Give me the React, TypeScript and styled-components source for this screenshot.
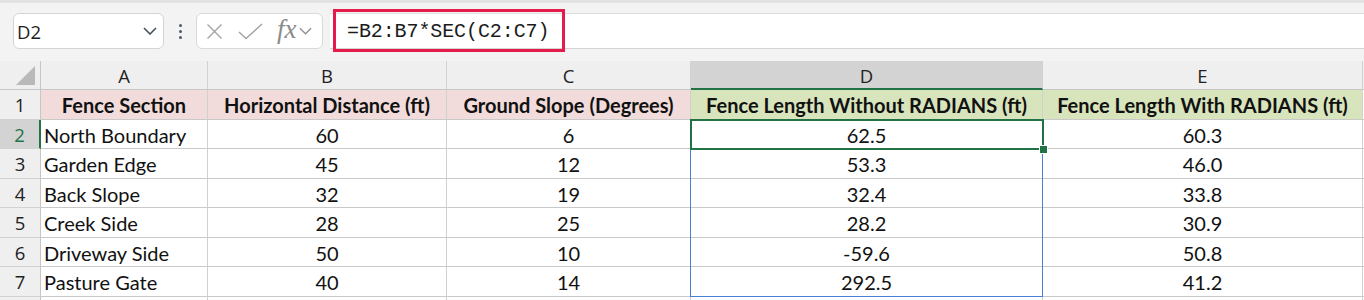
import React from "react";
import styled, { createGlobalStyle } from "styled-components";

const GlobalStyle = createGlobalStyle`
  html, body {
    margin: 0;
    padding: 0;
    background: #ffffff;
  }
  body {
    width: 1364px;
    height: 300px;
    overflow: hidden;
    font-family: Lato, "Liberation Sans", sans-serif;
  }
`;

const COLS = [41, 167, 239, 244, 352, 320];
const ROWS = [29, 30, 29, 30, 29, 30, 29, 30, 30];

const Toolbar = styled.div`
  height: 61px;
  box-sizing: border-box;
  background: #f3f3f3;
  border-top: 3px solid #e2e2e2;
  display: flex;
  align-items: flex-start;
  padding: 10px 0 0 13px;
`;

const NameBox = styled.div`
  width: 151px;
  height: 36px;
  box-sizing: border-box;
  background: #fff;
  border: 1px solid #d5d5d5;
  border-radius: 6px;
  display: flex;
  align-items: center;
  justify-content: space-between;
  padding: 0 6px 0 3px;
  font-family: "Open Sans", "Noto Sans", sans-serif;
  font-size: 18.5px;
  color: #1e1e1e;
`;

const Dots = styled.div`
  width: 32px;
  height: 36px;
  display: flex;
  flex-direction: column;
  align-items: center;
  justify-content: center;
  gap: 3px;

  span {
    width: 3px;
    height: 3px;
    border-radius: 50%;
    background: #4d5966;
  }
`;

const FxBox = styled.div`
  width: 127px;
  height: 36px;
  box-sizing: border-box;
  background: #fff;
  border: 1px solid #d9d9d9;
  border-radius: 6px;
  display: flex;
  align-items: center;
  padding: 0 4px 0 9px;
`;

const FxText = styled.span`
  font-family: "Liberation Serif", "DejaVu Serif", serif;
  font-style: italic;
  font-size: 27px;
  color: #8b8b8b;
  margin: -4px 2px 0 13px;
`;

const FormulaBar = styled.div`
  position: relative;
  flex: 1;
  height: 36px;
  margin-left: 7px;
  box-sizing: border-box;
  background: #fff;
  border-top: 1px solid #dedede;
  border-bottom: 1px solid #d3d3d3;
  display: flex;
  align-items: center;
  padding-left: 17px;
  font-family: "Liberation Mono", "DejaVu Sans Mono", monospace;
  font-size: 20px;
  letter-spacing: -0.1px;
  color: #1b1b1b;
`;

const Highlight = styled.div`
  position: absolute;
  left: 3px;
  top: -5px;
  width: 232px;
  height: 43px;
  box-sizing: border-box;
  border: 3px solid #e31c4c;
`;

const Sheet = styled.div`
  position: relative;
  display: grid;
  grid-template-columns: ${COLS.map((c) => c + "px").join(" ")} 1fr;
  grid-template-rows: ${ROWS.map((r) => r + "px").join(" ")};
`;

const HeadCell = styled.div<{ $active?: boolean }>`
  box-sizing: border-box;
  background: ${(p) => (p.$active ? "#d3d3d3" : "#efefef")};
  border-right: 1px solid #d2d2d2;
  border-bottom: ${(p) => (p.$active ? "2px solid #217346" : "1px solid #c6c6c6")};
  display: flex;
  align-items: center;
  justify-content: center;
  padding-top: 1px;
  font-family: "Open Sans", "Noto Sans", sans-serif;
  font-size: 18.5px;
  color: #222;
`;

const Corner = styled(HeadCell)`
  position: relative;
  border-right: 1px solid #c6c6c6;

  svg {
    position: absolute;
    right: 5px;
    bottom: 4px;
  }
`;

const RowHead = styled.div<{ $active?: boolean }>`
  box-sizing: border-box;
  background: ${(p) => (p.$active ? "#d3d3d3" : "#efefef")};
  border-right: ${(p) => (p.$active ? "2px solid #217346" : "1px solid #c6c6c6")};
  border-bottom: 1px solid #d2d2d2;
  display: flex;
  align-items: center;
  justify-content: center;
  font-family: "Open Sans", "Noto Sans", sans-serif;
  font-size: 18.5px;
  color: ${(p) => (p.$active ? "#217346" : "#222")};
`;

const Cell = styled.div<{ $fill?: string; $bold?: boolean; $left?: boolean }>`
  box-sizing: border-box;
  background: ${(p) => p.$fill || "#fff"};
  border-right: 1px solid #d0d0d0;
  border-bottom: 1px solid #c9c9c9;
  display: flex;
  align-items: center;
  justify-content: ${(p) => (p.$left ? "flex-start" : "center")};
  padding: 1px 3px 0;
  font-size: 20px;
  font-weight: ${(p) => (p.$bold ? 700 : 400)};
  color: #111;
  white-space: nowrap;
  overflow: hidden;
`;

const ActiveCell = styled.div`
  position: absolute;
  box-sizing: border-box;
  border: 2px solid #217346;
  pointer-events: none;
`;

const RangeBox = styled.div`
  position: absolute;
  box-sizing: border-box;
  border: 1.5px solid #4a7fd6;
  pointer-events: none;
`;

const FillHandle = styled.div`
  position: absolute;
  width: 7px;
  height: 7px;
  background: #217346;
  outline: 1px solid #fff;
`;

const PINK = "#f2dcdb";
const GREEN = "#d8e4bc";

const headers = [
  { text: "Fence Section", fill: PINK },
  { text: "Horizontal Distance (ft)", fill: PINK },
  { text: "Ground Slope (Degrees)", fill: PINK },
  { text: "Fence Length Without RADIANS (ft)", fill: GREEN },
  { text: "Fence Length With RADIANS (ft)", fill: GREEN },
];

const data = [
  ["North Boundary", "60", "6", "62.5", "60.3"],
  ["Garden Edge", "45", "12", "53.3", "46.0"],
  ["Back Slope", "32", "19", "32.4", "33.8"],
  ["Creek Side", "28", "25", "28.2", "30.9"],
  ["Driveway Side", "50", "10", "-59.6", "50.8"],
  ["Pasture Gate", "40", "14", "292.5", "41.2"],
];

const Chevron = () => (
  <svg width="14" height="8" viewBox="0 0 14 8">
    <polyline points="1,1 7,7 13,1" fill="none" stroke="#44505c" strokeWidth="1.6" />
  </svg>
);

const colX = (i: number) => COLS.slice(0, i).reduce((a, b) => a + b, 0);
const rowY = (i: number) => ROWS.slice(0, i).reduce((a, b) => a + b, 0);

export default function App() {
  const dLeft = colX(4) - 1;
  const dWidth = COLS[4] + 1;
  const r2Top = rowY(2) - 1;
  const r2H = ROWS[2] + 1;
  const r7Bottom = rowY(8);

  return (
    <>
      <GlobalStyle />
      <Toolbar>
        <NameBox>
          <span>D2</span>
          <Chevron />
        </NameBox>
        <Dots>
          <span />
          <span />
          <span />
        </Dots>
        <FxBox>
          <svg width="17" height="17" viewBox="0 0 17 17">
            <path d="M1.5 1.5 L15.5 15.5 M15.5 1.5 L1.5 15.5" stroke="#a3a3a3" strokeWidth="1.4" fill="none" />
          </svg>
          <svg width="26" height="17" viewBox="0 0 26 17" style={{ marginLeft: 15 }}>
            <polyline points="1,9 8,15.5 24,1" stroke="#a3a3a3" strokeWidth="1.4" fill="none" />
          </svg>
          <FxText>fx</FxText>
          <svg width="13" height="8" viewBox="0 0 14 8">
            <polyline points="1,1 7,7 13,1" fill="none" stroke="#8f8f8f" strokeWidth="1.4" />
          </svg>
        </FxBox>
        <FormulaBar>
          <Highlight />
          =B2:B7*SEC(C2:C7)
        </FormulaBar>
      </Toolbar>
      <Sheet>
        <Corner>
          <svg width="19" height="19" viewBox="0 0 19 19">
            <polygon points="19,0 19,19 0,19" fill="#b9b9b9" />
          </svg>
        </Corner>
        {["A", "B", "C", "D", "E"].map((l) => (
          <HeadCell key={l} $active={l === "D"}>
            {l}
          </HeadCell>
        ))}
        <HeadCell />

        <RowHead>1</RowHead>
        {headers.map((h) => (
          <Cell key={h.text} $fill={h.fill} $bold>
            {h.text}
          </Cell>
        ))}
        <Cell />

        {data.map((row, r) => (
          <React.Fragment key={row[0]}>
            <RowHead $active={r === 0}>{r + 2}</RowHead>
            {row.map((v, c) => (
              <Cell key={c} $left={c === 0}>
                {v}
              </Cell>
            ))}
            <Cell />
          </React.Fragment>
        ))}

        <RowHead />
        {[0, 1, 2, 3, 4, 5].map((c) => (
          <Cell key={c} />
        ))}

        <RangeBox
          style={{ left: dLeft, top: r2Top, width: dWidth, height: r7Bottom - r2Top }}
        />
        <ActiveCell style={{ left: dLeft, top: r2Top, width: dWidth + 1, height: r2H + 1 }} />
        <FillHandle style={{ left: dLeft + dWidth - 3, top: r2Top + r2H - 3 }} />
      </Sheet>
    </>
  );
}
